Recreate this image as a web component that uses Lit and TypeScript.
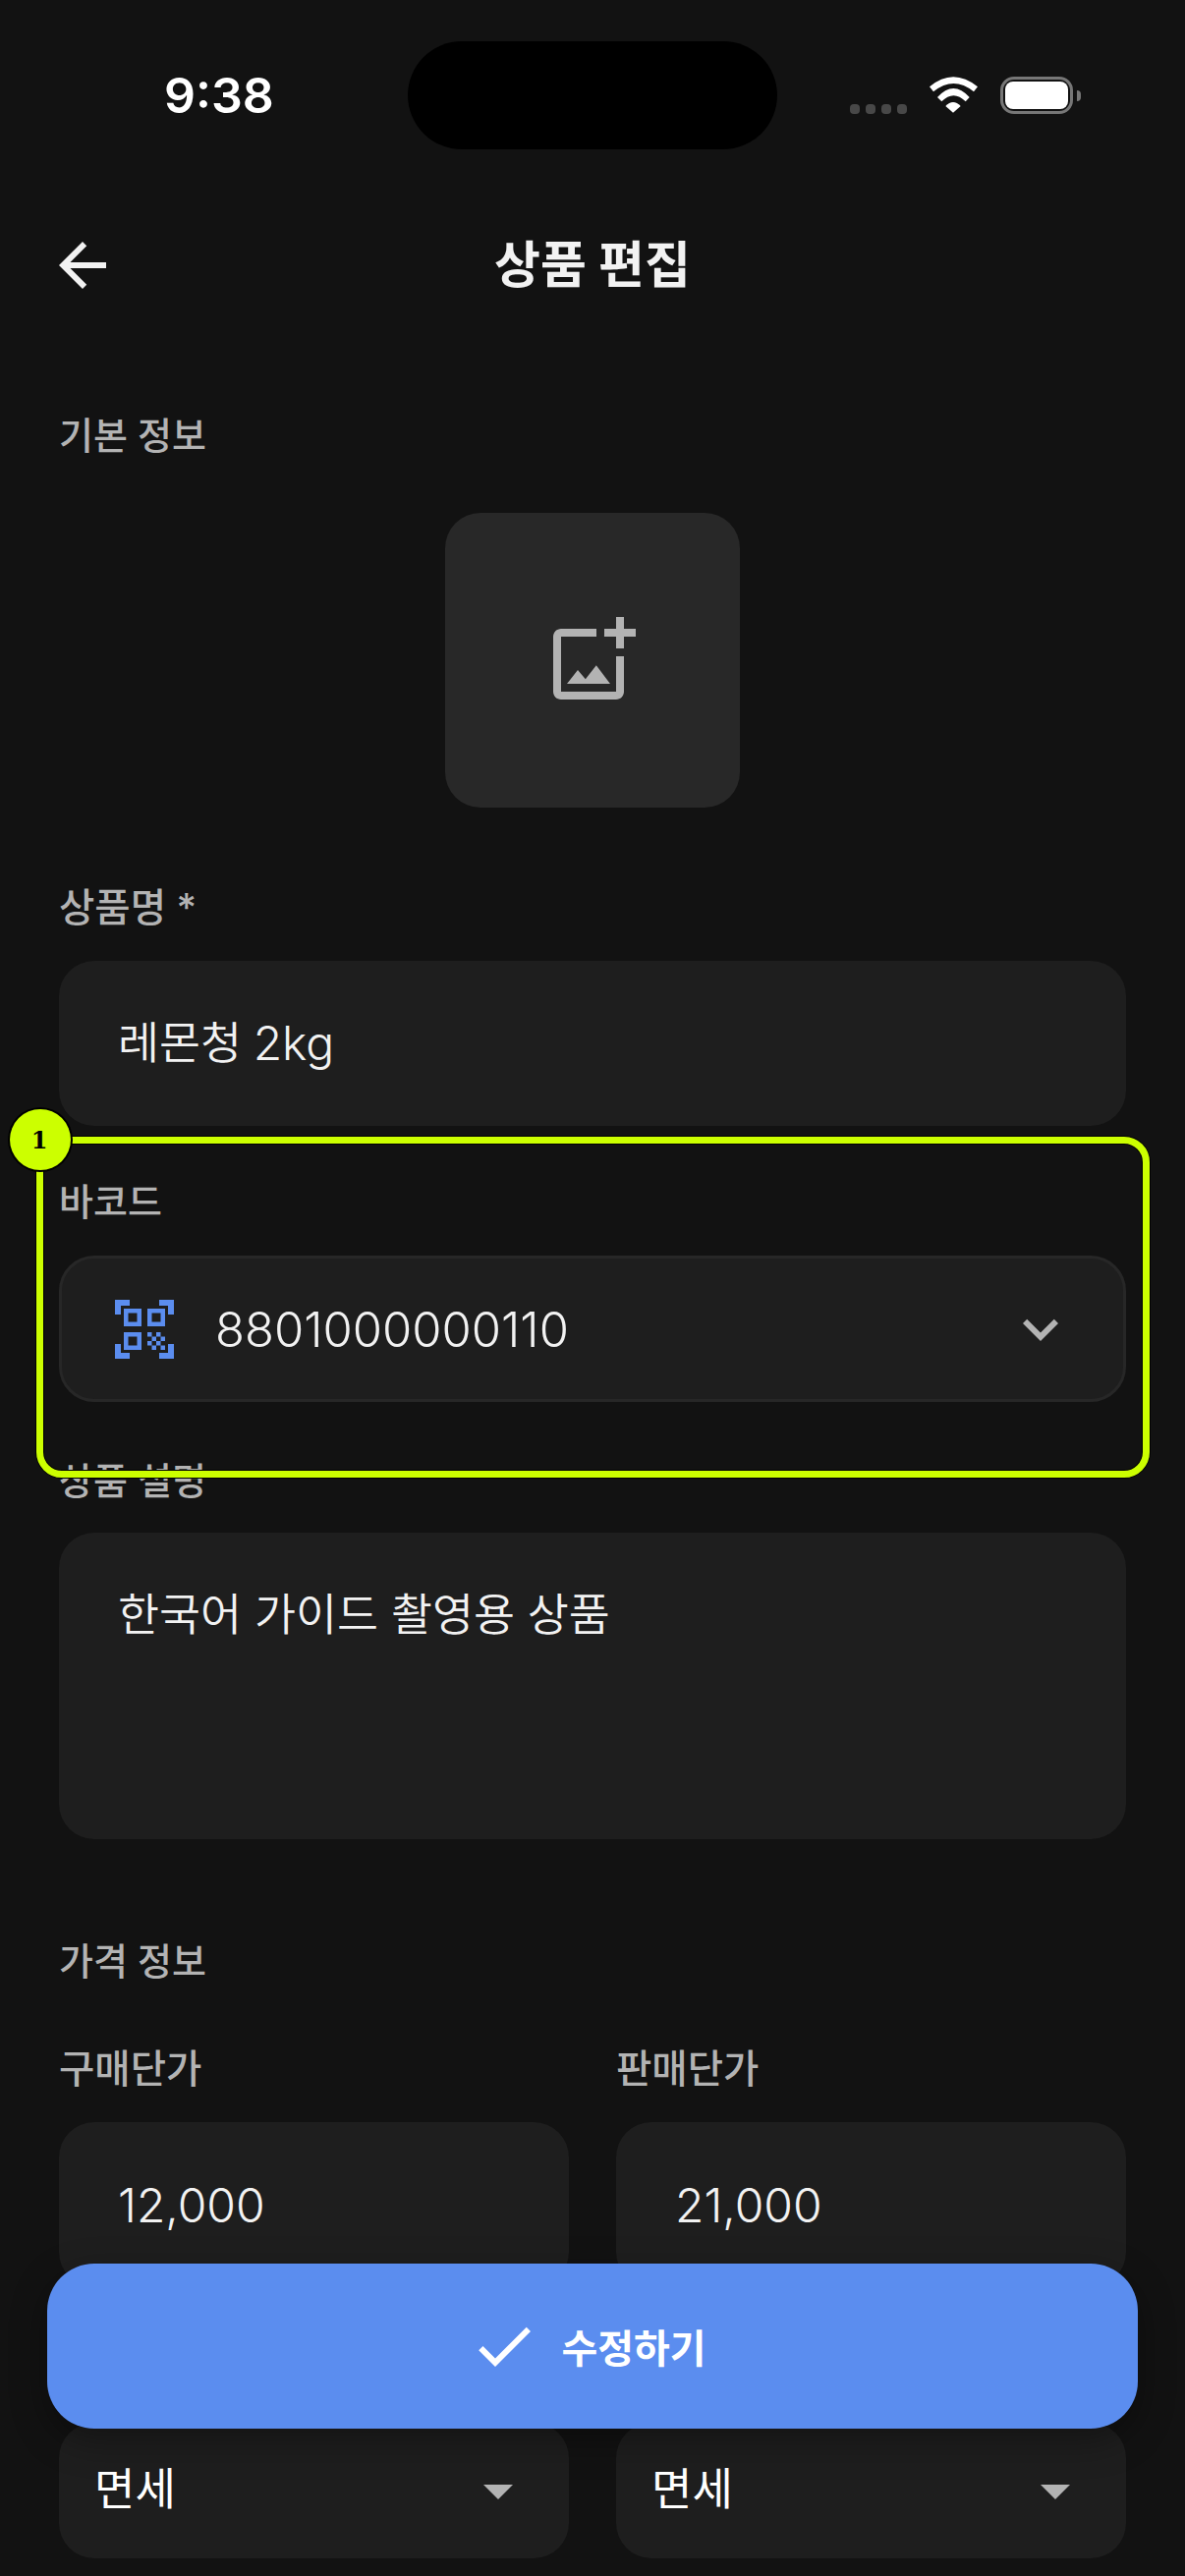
import { LitElement, html, css, svg } from "lit";
import { customElement } from "lit/decorators.js";

const icon = (d: unknown, size = 72, cls = "") =>
  html`<svg class=${cls} width=${size} height=${size} viewBox="0 0 24 24" fill="currentColor">${d}</svg>`;

const P = {
  back: svg`<path d="M20 11H7.83l5.59-5.59L12 4l-8 8 8 8 1.41-1.41L7.83 13H20v-2z"/>`,
  addPhoto: svg`<path d="M18 20H4V6h9V4H4c-1.1 0-2 .9-2 2v14c0 1.1.9 2 2 2h14c1.1 0 2-.9 2-2v-9h-2v9zm-7.79-3.17l-1.96-2.36L5.5 18h11l-3.54-4.71zM20 4V1h-2v3h-3c.01.01 0 2 0 2h3v2.99c.01.01 2 0 2 0V6h3V4h-3z"/>`,
  qr: svg`<path d="M9.5 6.5v3h-3v-3h3M11 5H5v6h6V5zm-1.5 9.5v3h-3v-3h3M11 13H5v6h6v-6zm6.5-6.5v3h-3v-3h3M19 5h-6v6h6V5zm-6 8h1.5v1.5H13V13zm1.5 1.5H16V16h-1.5v-1.5zM16 13h1.5v1.5H16V13zm-3 3h1.5v1.5H13V16zm1.5 1.5H16V19h-1.5v-1.5zM16 16h1.5v1.5H16V16zm1.5-1.5H19V16h-1.5v-1.5zm0 3H19V19h-1.5v-1.5zM22 7h-2V4h-3V2h5v5zm0 15v-5h-2v3h-3v2h5zM2 22h5v-2H4v-3H2v5zM2 2v5h2V4h3V2H2z"/>`,
  chevron: svg`<path d="M16.59 8.59L12 13.17 7.41 8.59 6 10l6 6 6-6z"/>`,
  drop: svg`<path d="M7 10l5 5 5-5z"/>`,
  check: svg`<path d="M9 16.17L4.83 12l-1.42 1.41L9 19 21 7l-1.41-1.41z"/>`,
};

@customElement("app-root")
export class AppRoot extends LitElement {
  static styles = css`
    :host {
      display: block;
      width: 1206px;
      height: 2622px;
      font-family: Inter, "Noto Sans CJK KR", sans-serif;
    }
    .page {
      position: relative;
      width: 1206px;
      height: 2622px;
      overflow: hidden;
      background: #121212;
      color: #f2f2f2;
    }
    .status {
      display: grid;
      grid-template-columns: 415px 376px 1fr;
      align-items: center;
      height: 194px;
    }
    .time {
      padding-left: 167px;
      font-size: 50px;
      font-weight: 600;
      line-height: 60px;
      color: #fff;
    }
    .island {
      height: 110px;
      border-radius: 55px;
      background: #000;
    }
    .sys {
      display: flex;
      align-items: flex-end;
      height: 38px;
      padding-left: 74px;
    }
    .dots {
      display: flex;
      gap: 6px;
    }
    .dots i {
      width: 10px;
      height: 10px;
      border-radius: 4px;
      background: #484848;
    }
    .wifi {
      display: block;
      margin-left: 22px;
    }
    .battery {
      box-sizing: border-box;
      width: 74px;
      height: 38px;
      margin-left: 23px;
      padding: 2px;
      border: 3px solid #777;
      border-radius: 14px;
    }
    .battery i {
      display: block;
      height: 100%;
      border-radius: 8px;
      background: #fff;
    }
    .tip {
      align-self: center;
      width: 4px;
      height: 11px;
      margin-left: 4px;
      border-radius: 0 6px 6px 0;
      background: #777;
    }
    .header {
      position: relative;
      display: flex;
      align-items: center;
      justify-content: center;
      height: 152px;
    }
    .header svg {
      position: absolute;
      left: 48px;
      top: 40px;
      color: #f2f2f2;
    }
    .title {
      font-size: 51px;
      font-weight: 700;
      line-height: 70px;
    }
    .form {
      padding: 0 60px;
    }
    .section,
    .label {
      font-size: 38px;
      font-weight: 500;
      line-height: 60px;
      color: #b3b3b3;
    }
    .label {
      font-size: 39.5px;
    }
    .label.short {
      font-size: 38px;
    }
    .photo {
      display: flex;
      align-items: center;
      justify-content: center;
      width: 300px;
      height: 300px;
      margin: 49px auto 0;
      border-radius: 36px;
      background: #282828;
      color: #b3b3b3;
    }
    .field {
      display: flex;
      align-items: center;
      gap: 0.24em;
      box-sizing: border-box;
      height: 168px;
      padding: 0 60px;
      border-radius: 36px;
      background: #1e1e1e;
      font-size: 48px;
      font-weight: 350;
      line-height: 60px;
      color: #f2f2f2;
    }
    .ko {
      font-size: 45.7px;
      font-weight: 350;
    }
    .num {
      padding-top: 2px;
    }
    .barcode {
      gap: 0;
      height: 149px;
      padding: 0 48px;
      border: 3px solid #272727;
      font-size: 49px;
    }
    .barcode .qr {
      flex: none;
      margin-right: 36px;
      color: #5b8def;
    }
    .barcode .value {
      flex: 1;
    }
    .barcode .chev {
      flex: none;
      color: #b3b3b3;
    }
    .area {
      align-items: flex-start;
      height: 312px;
      padding-top: 54px;
    }
    .cols {
      display: grid;
      grid-template-columns: 519px 519px;
      gap: 48px;
    }
    .select {
      height: 138px;
      padding: 0 36px;
      justify-content: space-between;
    }
    .select .ko {
      font-size: 45px;
      font-weight: 400;
      padding-bottom: 3px;
      color: #fff;
    }
    .select svg {
      color: #b3b3b3;
    }
    .m-name { margin-top: 72px; }
    .m-input-name { margin-top: 24px; }
    .m-barcode { margin-top: 47px; }
    .m-input-barcode { margin-top: 25px; }
    .m-desc { margin-top: 50px; }
    .m-input-desc { margin-top: 23px; }
    .m-price { margin-top: 94px; }
    .m-cols { margin-top: 50px; }
    .m-input-price { margin-top: 24px; }
    .m-tax { margin-top: 138px; }

    .save {
      position: absolute;
      left: 48px;
      top: 2304px;
      display: flex;
      align-items: center;
      justify-content: center;
      gap: 22px;
      box-sizing: border-box;
      width: 1110px;
      height: 168px;
      padding-right: 10px;
      border-radius: 48px;
      background: #5b8def;
      box-shadow: 0 12px 36px rgba(0, 0, 0, 0.35);
      color: #fff;
      font-size: 40px;
      font-weight: 700;
    }
    .mark {
      position: absolute;
      left: 37px;
      top: 1157px;
      box-sizing: border-box;
      width: 1133px;
      height: 347px;
      border: 7px solid #ccff00;
      border-radius: 26px;
      box-shadow: 0 0 0 1px #000, inset 0 0 0 1px #000;
    }
    .badge {
      position: absolute;
      left: 10px;
      top: 1129px;
      display: flex;
      align-items: center;
      justify-content: center;
      box-sizing: border-box;
      width: 62px;
      height: 62px;
      padding-right: 2px;
      border-radius: 50%;
      background: #ccff00;
      box-shadow: 0 0 0 2px #000;
      color: #000;
      font-family: "DejaVu Serif", serif;
      font-size: 24px;
      font-weight: 700;
    }
  `;

  render() {
    return html`
      <div class="page">
        <div class="status">
          <div class="time">9:38</div>
          <div class="island"></div>
          <div class="sys">
            <div class="dots"><i></i><i></i><i></i><i></i></div>
            <svg class="wifi" width="50" height="38" viewBox="0 0 50 38" fill="#fff">
              <path d="M1 10.3Q25-9.7 50 10.3L46 15.3Q25.5-1.3 5 15.3Z" />
              <path d="M9 21Q25.3 3 41.7 21L37.7 25.3Q25.5 13.3 13.3 25.3Z" />
              <path d="M17.3 30Q25 22 32.7 30L25 36.7Z" />
            </svg>
            <div class="battery"><i></i></div>
            <div class="tip"></div>
          </div>
        </div>
        <div class="header">
          ${icon(P.back)}
          <div class="title">상품 편집</div>
        </div>
        <div class="form">
          <div class="section" style="margin-top:67px">기본 정보</div>
          <div class="photo">${icon(P.addPhoto, 96)}</div>

          <div class="label m-name">상품명 *</div>
          <div class="field m-input-name"><span class="ko">레몬청</span><span>2kg</span></div>

          <div class="label short m-barcode">바코드</div>
          <div class="field barcode m-input-barcode">
            ${icon(P.qr, 72, "qr")}
            <span class="value num">8801000000110</span>
            ${icon(P.chevron, 72, "chev")}
          </div>

          <div class="label short m-desc">상품 설명</div>
          <div class="field area m-input-desc"><span class="ko">한국어 가이드 촬영용 상품</span></div>

          <div class="section m-price">가격 정보</div>
          <div class="cols m-cols">
            <div>
              <div class="label">구매단가</div>
              <div class="field m-input-price"><span class="num">12,000</span></div>
              <div class="field select m-tax"><span class="ko">면세</span>${icon(P.drop)}</div>
            </div>
            <div>
              <div class="label">판매단가</div>
              <div class="field m-input-price"><span class="num">21,000</span></div>
              <div class="field select m-tax"><span class="ko">면세</span>${icon(P.drop)}</div>
            </div>
          </div>
        </div>
        <div class="save">${icon(P.check)}<span>수정하기</span></div>
        <div class="mark"></div>
        <div class="badge">1</div>
      </div>
    `;
  }
}
